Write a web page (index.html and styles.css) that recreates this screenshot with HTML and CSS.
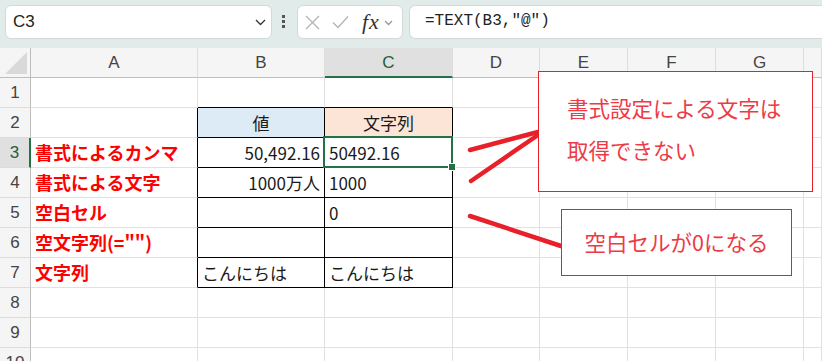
FILE: index.html
```html
<!DOCTYPE html>
<html lang="ja">

<head>
    <meta charset="UTF-8" />
    <meta name="viewport" content="width=device-width, initial-scale=1.0" />
    <title>TEXT関数</title>
    <link rel="stylesheet" href="styles.css">
</head>

<body>
    <!-- Formula bar -->
    <div class="topbar">
        <div class="namebox">
            <span class="ref">C3</span>
            <svg class="chev" width="11" height="7" viewBox="0 0 11 7"><polyline points="1,1 5.5,5.5 10,1" /></svg>
        </div>
        <div class="dots"><i></i><i></i><i></i></div>
        <div class="fnbox">
            <svg class="icon-x" width="15" height="15" viewBox="0 0 15 15"><line x1="1" y1="1" x2="14" y2="14" /><line x1="14" y1="1" x2="1" y2="14" /></svg>
            <svg class="icon-ok" width="17" height="14" viewBox="0 0 17 14"><polyline points="1,7.5 6,12.5 16,1.5" /></svg>
            <span class="fx">fx</span>
            <svg class="chev-sm" width="9" height="6" viewBox="0 0 9 6"><polyline points="1,1 4.5,4.5 8,1" /></svg>
        </div>
        <div class="formula">=TEXT(B3,"@")</div>
    </div>

    <!-- Sheet grid -->
    <div class="sheet">
        <div class="corner"><span></span></div>
        <div class="ch">A</div><div class="ch">B</div><div class="ch sel">C</div><div class="ch">D</div>
        <div class="ch">E</div><div class="ch">F</div><div class="ch">G</div><div class="ch"></div>

        <div class="rh">1</div>
        <div></div><div class="tt"></div><div class="tt"></div><div></div><div></div><div></div><div></div><div></div>

        <div class="rh">2</div>
        <div class="tl"></div><div class="tb center blue">値</div><div class="tb center peach">文字列</div>
        <div></div><div></div><div></div><div></div><div></div>

        <div class="rh sel">3</div>
        <div class="tl label">書式によるカンマ</div><div class="tb num">50,492.16</div><div class="tb active">50492.16</div>
        <div></div><div></div><div></div><div></div><div></div>

        <div class="rh">4</div>
        <div class="tl label">書式による文字</div><div class="tb num">1000万人</div><div class="tb">1000</div>
        <div></div><div></div><div></div><div></div><div></div>

        <div class="rh">5</div>
        <div class="tl label">空白セル</div><div class="tb"></div><div class="tb">0</div>
        <div></div><div></div><div></div><div></div><div></div>

        <div class="rh">6</div>
        <div class="tl label">空文字列(="")</div><div class="tb"></div><div class="tb"></div>
        <div></div><div></div><div></div><div></div><div></div>

        <div class="rh">7</div>
        <div class="tl label">文字列</div><div class="tb">こんにちは</div><div class="tb">こんにちは</div>
        <div></div><div></div><div></div><div></div><div></div>

        <div class="rh">8</div>
        <div></div><div></div><div></div><div></div><div></div><div></div><div></div><div></div>

        <div class="rh">9</div>
        <div></div><div></div><div></div><div></div><div></div><div></div><div></div><div></div>

        <div class="rh">10</div>
        <div></div><div></div><div></div><div></div><div></div><div></div><div></div><div></div>
    </div>

    <!-- Callout arrows -->
    <svg class="arrows" width="822" height="361" viewBox="0 0 822 361">
        <line x1="470" y1="150" x2="538" y2="132" />
        <line x1="471" y1="181" x2="538" y2="135" />
        <line x1="470" y1="216" x2="561" y2="246" />
    </svg>

    <div class="callout callout-1">書式設定による文字は<br>取得できない</div>
    <div class="callout callout-2">空白セルが0になる</div>
</body>

</html>
```

FILE: styles.css
```css
body {
    margin: 0;
    width: 822px;
    height: 361px;
    overflow: hidden;
    position: relative;
    background-color: #fff;
    font-family: "Noto Sans CJK JP", sans-serif;
}

/* Formula bar */
.topbar {
    height: 48px;
    box-sizing: border-box;
    padding: 5px 0 0 5px;
    background-color: #e1ecea;
    display: flex;
    align-items: flex-start;
}

.namebox,
.fnbox,
.formula {
    height: 34px;
    box-sizing: border-box;
    background-color: #fff;
    border: 1px solid #d2dad8;
    border-radius: 6px;
}

.namebox {
    width: 267px;
    display: flex;
    align-items: center;
    justify-content: space-between;
    padding: 0 5px 0 7px;
}

.ref {
    font-family: "Liberation Sans", Arial, sans-serif;
    font-size: 17px;
    color: #222;
}

.chev polyline,
.chev-sm polyline {
    fill: none;
    stroke: #333;
    stroke-width: 1.3;
}

.chev-sm polyline {
    stroke: #999;
}

.dots {
    width: 4px;
    margin: 0 11px 0 10px;
    padding-top: 10px;
    display: flex;
    flex-direction: column;
    gap: 2px;
}

.dots i {
    width: 3px;
    height: 3px;
    background-color: #555;
}

.fnbox {
    width: 106px;
    display: flex;
    align-items: center;
    padding-left: 7px;
    gap: 0;
}

.icon-x line,
.icon-ok polyline {
    fill: none;
    stroke: #b4b4b4;
    stroke-width: 1.3;
}

.icon-ok {
    margin-left: 12px;
}

.fx {
    margin-left: 13px;
    font-family: "Liberation Serif", serif;
    font-style: italic;
    font-size: 22px;
    color: #333;
    line-height: 30px;
    letter-spacing: 1px;
}

.chev-sm {
    margin-left: 4px;
    margin-top: 2px;
}

.formula {
    flex: 1;
    margin-left: 6px;
    border-right: none;
    border-radius: 6px 0 0 6px;
    padding-left: 15px;
    font-family: "Liberation Mono", monospace;
    font-size: 16px;
    line-height: 31px;
    color: #222;
}

/* Sheet */
.sheet {
    display: grid;
    grid-template-columns: 31px 167px 127px 128px 87px 88px 88px 88px 1fr;
    grid-auto-rows: 30px;
}

.sheet > div {
    box-sizing: border-box;
    border-right: 1px solid #e1e1e1;
    border-bottom: 1px solid #e1e1e1;
    font-size: 17px;
    line-height: 29px;
    white-space: nowrap;
    overflow: hidden;
    color: #1a1a1a;
    padding: 0 4px;
}

.sheet > .ch,
.sheet > .rh,
.sheet > .corner {
    background-color: #f5f5f5;
    text-align: center;
    color: #444;
    padding: 0;
}

.sheet > .ch {
    border-right-color: #dcdcdc;
    border-bottom-color: #bdbdbd;
    font-family: "Liberation Sans", Arial, sans-serif;
    font-size: 17px;
}

.sheet > .rh {
    border-right-color: #bdbdbd;
    border-bottom-color: #dcdcdc;
    font-family: "Liberation Sans", Arial, sans-serif;
    font-size: 17px;
}

.sheet > .corner {
    border-right-color: #bdbdbd;
    border-bottom-color: #bdbdbd;
    display: flex;
    justify-content: flex-end;
    align-items: flex-end;
    padding: 0 3px 3px 0;
}

.corner span {
    width: 0;
    height: 0;
    border-left: 22px solid transparent;
    border-bottom: 22px solid #d9d9d9;
}

.sheet > .ch.sel {
    background-color: #e0e0e0;
    border-bottom: 2px solid #217346;
    color: #1e5e3a;
}

.sheet > .rh.sel {
    background-color: #e0e0e0;
    border-right: 2px solid #217346;
    color: #1e5e3a;
}

/* Bordered table B2:C7 */
.sheet > .tt {
    border-bottom-color: #000;
}

.sheet > .tl {
    border-right-color: #000;
}

.sheet > .tb {
    border-right-color: #000;
    border-bottom-color: #000;
}

.sheet > .center {
    text-align: center;
}

.sheet > .num {
    text-align: right;
}

.sheet > .blue {
    background-color: #ddebf7;
}

.sheet > .peach {
    background-color: #fce4d6;
}

.sheet > .label {
    color: #ff0000;
    font-weight: bold;
    font-size: 18px;
}

.sheet > .active {
    position: relative;
    overflow: visible;
}

.active::after {
    content: "";
    position: absolute;
    top: -2px;
    left: -2px;
    right: -1px;
    bottom: -1px;
    border: 2px solid #217346;
}

.active::before {
    content: "";
    position: absolute;
    right: -4px;
    bottom: -4px;
    width: 6px;
    height: 6px;
    background-color: #217346;
    border: 1px solid #fff;
    z-index: 1;
}

/* Callouts */
.arrows {
    position: absolute;
    top: 0;
    left: 0;
    pointer-events: none;
}

.arrows line {
    stroke: #e8202a;
    stroke-width: 4.5;
    stroke-linecap: round;
}

.callout {
    position: absolute;
    box-sizing: border-box;
    background-color: #fff;
    border: 1px solid #e8202a;
    color: #ee3a45;
    font-size: 21.5px;
}

.callout-1 {
    left: 538px;
    top: 71px;
    width: 275px;
    height: 121px;
    padding: 15px 0 0 28px;
    line-height: 42px;
}

.callout-2 {
    left: 561px;
    top: 209px;
    width: 231px;
    height: 67px;
    line-height: 64px;
    text-align: center;
}
```
